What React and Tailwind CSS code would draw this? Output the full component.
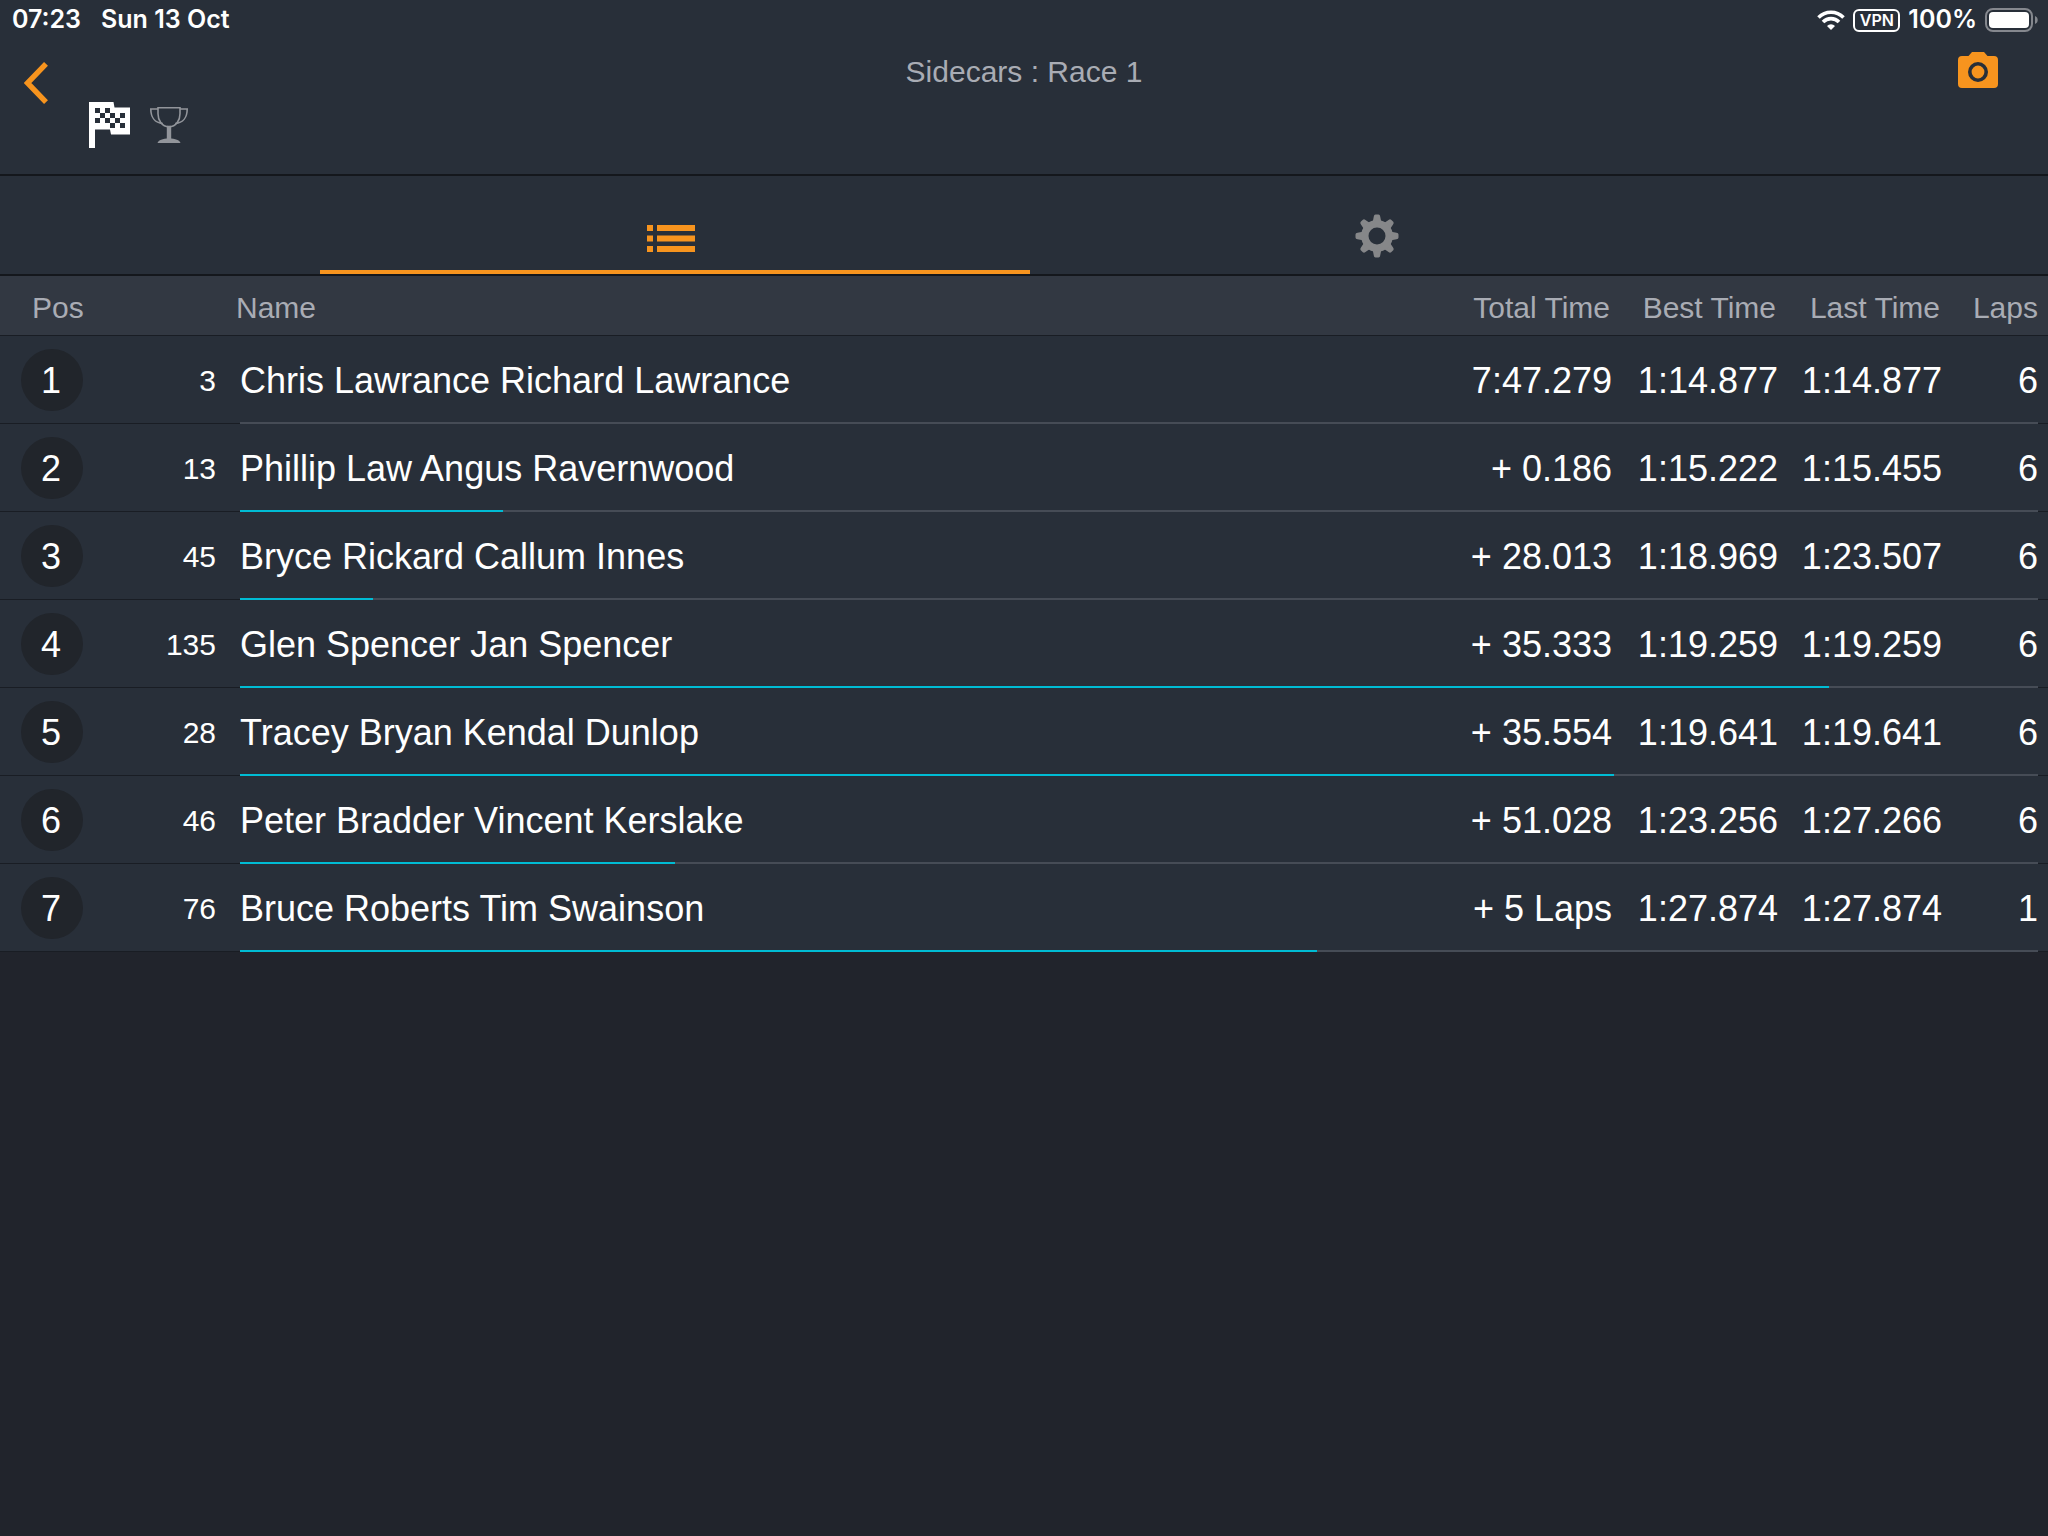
import { useState } from 'react'

const results = [
  { pos: 1, number: 3, name: 'Chris Lawrance Richard Lawrance', total: '7:47.279', best: '1:14.877', last: '1:14.877', laps: 6, progress: 0 },
  { pos: 2, number: 13, name: 'Phillip Law Angus Ravernwood', total: '+ 0.186', best: '1:15.222', last: '1:15.455', laps: 6, progress: 14.6 },
  { pos: 3, number: 45, name: 'Bryce Rickard Callum Innes', total: '+ 28.013', best: '1:18.969', last: '1:23.507', laps: 6, progress: 7.4 },
  { pos: 4, number: 135, name: 'Glen Spencer Jan Spencer', total: '+ 35.333', best: '1:19.259', last: '1:19.259', laps: 6, progress: 88.4 },
  { pos: 5, number: 28, name: 'Tracey Bryan Kendal Dunlop', total: '+ 35.554', best: '1:19.641', last: '1:19.641', laps: 6, progress: 76.4 },
  { pos: 6, number: 46, name: 'Peter Bradder Vincent Kerslake', total: '+ 51.028', best: '1:23.256', last: '1:27.266', laps: 6, progress: 24.2 },
  { pos: 7, number: 76, name: 'Bruce Roberts Tim Swainson', total: '+ 5 Laps', best: '1:27.874', last: '1:27.874', laps: 1, progress: 59.9 }
]

const WifiIcon = () => (
  <svg className="h-5 w-7" viewBox="0 0 28 20" fill="none" stroke="#fff">
    <path d="M1.5 7.400a17.600 17.600 0 0 1 25 0" strokeWidth="3.600" />
    <path d="M6 12a11.200 11.200 0 0 1 16 0" strokeWidth="3.600" />
    <path d="M14 20l-4-4a5.700 5.700 0 0 1 8 0z" fill="#fff" stroke="none" />
  </svg>
)

const BatteryIcon = () => (
  <svg className="h-6 w-[53px]" viewBox="0 0 53 24">
    <rect x="1" y="1" width="46" height="22" rx="7" fill="none" stroke="#85888e" strokeWidth="2" />
    <rect x="4" y="4" width="40" height="16" rx="4" fill="#fff" />
    <path d="M50 8c3.600 1.200 3.600 6.800 0 8z" fill="#85888e" />
  </svg>
)

const BackIcon = () => (
  <svg className="h-[42px] w-6" viewBox="0 0 24 42" fill="none" stroke="#f7941e" strokeWidth="5.400">
    <path d="M22 1.900L3.500 21 22 40.100" />
  </svg>
)

const FlagIcon = () => (
  <svg className="h-[46px] w-[41px]" viewBox="0 0 41 46">
    <path d="M0 0h24.500l1 5.500H41v27H22l-1-5H6V46H0z" fill="#fff" />
    <g fill="#282f39">
      <path d="M6 6h5v5H6zM16 6h5v5h-5zM11 11h5v5h-5zM21 11h5v5h-5zM31 11h5v5h-5z" />
      <path d="M6 16h5v5H6zM16 16h5v5h-5zM26 16h5v5h-5zM21 21h5v5h-5zM31 21h5v5h-5z" />
    </g>
  </svg>
)

const TrophyIcon = () => (
  <svg className="h-9 w-[38px]" viewBox="0 0 38 36" fill="none" stroke="#92959b" strokeWidth="1.600">
    <path d="M8 .8h22v6c0 6-3.500 13-11 13S8 12.800 8 6.800z" />
    <path d="M8 2H.8c0 8 4 14 12 14.500M30 2h7.200c0 8-4 14-12 14.500" />
    <path d="M17.600 19.500h2.800V32h-2.800z" fill="#92959b" />
    <path d="M7.500 36c1-3 5-4.500 11.500-4.500S29.500 33 30.500 36z" fill="#92959b" stroke="none" />
  </svg>
)

const CameraIcon = () => (
  <svg className="h-9 w-10" viewBox="0 0 40 36">
    <path d="M4 4h6.500L14 0h12l3.500 4H36a4 4 0 0 1 4 4v24a4 4 0 0 1-4 4H4a4 4 0 0 1-4-4V8a4 4 0 0 1 4-4z" fill="#f7941e" />
    <circle cx="20" cy="20" r="8.200" fill="none" stroke="#282f39" strokeWidth="3.600" />
  </svg>
)

const ListIcon = () => (
  <svg className="h-[27px] w-12" viewBox="0 0 48 27" fill="#f7941e">
    <path d="M0 0h6v6H0zM10 0h38v6H10zM0 10.500h6v6H0zM10 10.500h38v6H10zM0 21h6v6H0zM10 21h38v6H10z" />
  </svg>
)

const GearIcon = () => (
  <svg className="h-11 w-11" viewBox="0 0 44 44">
    <g fill="#868789">
      {[0, 45, 90, 135, 180, 225, 270, 315].map((angle) => (
        <path key={angle} d="M17.500 9l1.300-6.500Q19 .5 20.500 .5h3Q25 .5 25.200 2.500L26.500 9z" transform={`rotate(${angle} 22 22)`} />
      ))}
    </g>
    <circle cx="22" cy="22" r="12.200" fill="none" stroke="#868789" strokeWidth="7.400" />
  </svg>
)

const StatusBar = () => (
  <div className="flex h-10 items-center justify-between pl-3 pr-[10px] font-['Inter',sans-serif] text-[25px] font-semibold text-white">
    <div className="flex gap-5">
      <span>07:23</span>
      <span>Sun 13 Oct</span>
    </div>
    <div className="flex items-center gap-2">
      <WifiIcon />
      <span className="flex h-[23px] w-[47px] items-center justify-center rounded-md border-2 border-white text-base">VPN</span>
      <span>100%</span>
      <BatteryIcon />
    </div>
  </div>
)

const App = () => {
  const [activeTab, setActiveTab] = useState('results')

  return (
    <div className="min-h-screen bg-[#21242c] font-['Liberation_Sans',Arial,sans-serif]">
      <header className="border-b-2 border-[#14171c] bg-[#282f39]">
        <StatusBar />
        <div className="grid h-[134px] grid-cols-[1fr_auto_1fr] items-start">
          <div className="flex items-start pl-6">
            <button type="button" aria-label="Back" className="mt-[22px]">
              <BackIcon />
            </button>
            <div className="ml-[41px] mt-[62px] flex items-center gap-5">
              <FlagIcon />
              <TrophyIcon />
            </div>
          </div>
          <h1 className="mt-3 text-[30px] leading-10 text-[#a9acb4]">Sidecars : Race 1</h1>
          <button type="button" aria-label="Take screenshot" className="mr-[50px] mt-3 justify-self-end">
            <CameraIcon />
          </button>
        </div>
      </header>

      {/* Tabs */}
      <nav className="grid h-[100px] grid-cols-[355fr_349fr] border-b-2 border-[#14171c] bg-[#282f39] px-80">
        <button
          type="button"
          aria-label="Results"
          onClick={() => setActiveTab('results')}
          className={`flex items-end justify-center border-b-4 pb-[18px] pr-2 ${activeTab === 'results' ? 'border-[#f7941e]' : 'border-transparent'}`}
        >
          <ListIcon />
        </button>
        <button
          type="button"
          aria-label="Settings"
          onClick={() => setActiveTab('settings')}
          className={`flex items-end justify-center border-b-4 pb-3 pr-1 ${activeTab === 'settings' ? 'border-[#f7941e]' : 'border-transparent'}`}
        >
          <GearIcon />
        </button>
      </nav>

      {/* Results */}
      <table className="w-full table-fixed border-separate border-spacing-0 bg-[#282f39] text-right text-4xl text-white">
        <colgroup>
          <col className="w-[104px]" />
          <col className="w-[136px]" />
          <col />
          <col className="w-[170px]" />
          <col className="w-[166px]" />
          <col className="w-[164px]" />
          <col className="w-[106px]" />
        </colgroup>
        <thead className="bg-[#323842] text-[30px] leading-8 text-[#a9acb4]">
          <tr className="h-[60px]">
            <th scope="col" className="border-b border-[#191d24] pl-8 pt-1 text-left font-normal">Pos</th>
            <th scope="col" colSpan={2} className="border-b border-[#191d24] pl-[132px] pt-1 text-left font-normal">Name</th>
            <th scope="col" className="border-b border-[#191d24] pr-0.5 pt-1 font-normal">Total Time</th>
            <th scope="col" className="border-b border-[#191d24] pr-0.5 pt-1 font-normal">Best Time</th>
            <th scope="col" className="border-b border-[#191d24] pr-0.5 pt-1 font-normal">Last Time</th>
            <th scope="col" className="border-b border-[#191d24] pr-[10px] pt-1 font-normal">Laps</th>
          </tr>
        </thead>
        {results.map((entry) => (
          <tbody key={entry.pos}>
            <tr className="h-[86px]">
              <td className="pl-[21px] pt-0.5">
                <div className="flex size-[62px] items-center justify-center rounded-full bg-[#21252b] pr-0.5 pt-0.5">{entry.pos}</div>
              </td>
              <td className="pr-6 pt-1 text-[30px]">{entry.number}</td>
              <td className="truncate pt-1 text-left">{entry.name}</td>
              <td className="pt-1">{entry.total}</td>
              <td className="pt-1">{entry.best}</td>
              <td className="pt-1">{entry.last}</td>
              <td className="pr-[10px] pt-1">{entry.laps}</td>
            </tr>
            <tr className="h-0.5">
              <td colSpan={2} className="border-b border-[#191d24]"></td>
              <td colSpan={5}>
                <div className="flex h-0.5">
                  <div className="flex-1 bg-[#464c56]">
                    <div className="h-0.5 bg-[#00bcd4]" style={{ width: `${entry.progress}%` }} />
                  </div>
                  <div className="w-[10px] border-b border-[#191d24]" />
                </div>
              </td>
            </tr>
          </tbody>
        ))}
      </table>
    </div>
  )
}

export default App
